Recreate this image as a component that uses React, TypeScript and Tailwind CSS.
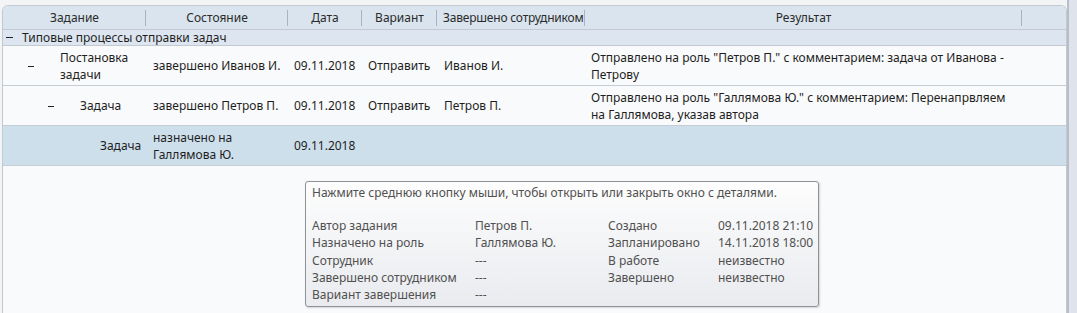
import type { ReactNode } from 'react';

const cols = 'grid grid-cols-[143px_142px_74px_75px_148px_437px_1fr]';

function HeadCell({ children, center = true }: { children?: ReactNode; center?: boolean }) {
  return (
    <div className="relative flex items-center h-full whitespace-nowrap">
      <div className={center ? 'w-full text-center' : 'pl-[6px] tracking-[-0.2px]'}>{children}</div>
      <div className="absolute right-0 top-[4px] h-[16px] w-px bg-[#a9b3be]" />
    </div>
  );
}

function Minus({ className }: { className?: string }) {
  return <span className={`inline-block h-px w-[6px] bg-[#222] ${className ?? ''}`} />;
}

type Row = {
  level: number;
  task: string[];
  state: string[];
  date: string;
  variant: string;
  employee: string;
  result: string[];
  selected?: boolean;
  expandable?: boolean;
};

const rows: Row[] = [
  {
    level: 0,
    task: ['Постановка', 'задачи'],
    state: ['завершено Иванов И.'],
    date: '09.11.2018',
    variant: 'Отправить',
    employee: 'Иванов И.',
    result: ['Отправлено на роль "Петров П." с комментарием: задача от Иванова -', 'Петрову'],
    expandable: true
  },
  {
    level: 1,
    task: ['Задача'],
    state: ['завершено Петров П.'],
    date: '09.11.2018',
    variant: 'Отправить',
    employee: 'Петров П.',
    result: ['Отправлено на роль "Галлямова Ю." с комментарием: Перенапрвляем', 'на Галлямова, указав автора'],
    expandable: true
  },
  {
    level: 2,
    task: ['Задача'],
    state: ['назначено на', 'Галлямова Ю.'],
    date: '09.11.2018',
    variant: '',
    employee: '',
    result: [],
    selected: true
  }
];

function Lines({ lines }: { lines: string[] }) {
  return (
    <div className="whitespace-nowrap">
      {lines.map((line) => (
        <div key={line}>{line}</div>
      ))}
    </div>
  );
}

function DataRow({ row }: { row: Row }) {
  const indent = ['pl-[57px]', 'pl-[77px]', 'pl-[97px]'][row.level];
  const minusPos = ['left-[25px]', 'left-[45px]', 'left-[65px]'][row.level];
  return (
    <div className={`${cols} h-[40px] border-b border-[#c6cdd5] ${row.selected ? 'bg-[#cedfec]' : 'bg-[#f9fafb]'}`}>
      <div className={`relative flex items-center ${indent}`}>
        {row.expandable ? <Minus className={`absolute top-[20px] ${minusPos}`} /> : null}
        <Lines lines={row.task} />
      </div>
      <div className="flex items-center pl-[7px]"><Lines lines={row.state} /></div>
      <div className="flex items-center pl-[6px]">{row.date}</div>
      <div className="flex items-center pl-[6px]">{row.variant}</div>
      <div className="flex items-center pl-[7px]">{row.employee}</div>
      <div className="flex items-center pl-[6px]"><Lines lines={row.result} /></div>
      <div />
    </div>
  );
}

const details: [string, string, string, string][] = [
  ['Автор задания', 'Петров П.', 'Создано', '09.11.2018 21:10'],
  ['Назначено на роль', 'Галлямова Ю.', 'Запланировано', '14.11.2018 18:00'],
  ['Сотрудник', '---', 'В работе', 'неизвестно'],
  ['Завершено сотрудником', '---', 'Завершено', 'неизвестно'],
  ['Вариант завершения', '---', '', '']
];

export default function App() {
  return (
    <div className="flex h-[313px] w-[1077px] overflow-hidden bg-[#f3f4f6] font-['Noto_Sans',sans-serif] text-[12px] leading-[17px] text-[#1e1e1e]">
      <div className="flex-1 pl-[2px] pt-[5px]">
        <div className="flex h-full flex-col overflow-hidden rounded-t-[6px] border-x border-t border-[#c3c9d0] bg-[#f9fafb]">
          <div className={`${cols} h-[24px] border-b border-[#c3cad2] bg-[#d9e4ee] text-[#2b2b2b]`}>
            <HeadCell>Задание</HeadCell>
            <HeadCell>Состояние</HeadCell>
            <HeadCell>Дата</HeadCell>
            <HeadCell>Вариант</HeadCell>
            <HeadCell center={false}>Завершено сотрудником</HeadCell>
            <HeadCell>Результат</HeadCell>
            <div />
          </div>
          <div className="relative flex h-[16px] items-center border-b border-[#c3cad2] bg-[#dde6f0] pl-[19px]">
            <Minus className="absolute left-[3px] top-[7px] w-[7px]" />
            <span className="whitespace-nowrap">Типовые процессы отправки задач</span>
          </div>
          {rows.map((row, i) => (
            <DataRow key={i} row={row} />
          ))}
          <div className="pl-[302px] pt-[15px]">
            <div className="w-[514px] h-[126px] rounded-[3px] border border-[#8e9196] bg-gradient-to-b from-[#fdfdfd] to-[#e9ebef] px-[6px] pt-[2px] text-[#505050] shadow-[1px_1px_2px_rgba(0,0,0,0.15)]">
              <div className="whitespace-nowrap">Нажмите среднюю кнопку мыши, чтобы открыть или закрыть окно с деталями.</div>
              <div className="mt-[16px] grid grid-cols-[163px_133px_110px_1fr] leading-[17.25px]">
                {details.map((d) =>
                  d.map((cell, j) => (
                    <div key={d[0] + j} className="whitespace-nowrap">{cell}</div>
                  ))
                )}
              </div>
            </div>
          </div>
        </div>
      </div>
      <div className="w-[10px] border-l-[2px] border-[#b9bec6] bg-[#dfe3ec]" />
    </div>
  );
}
